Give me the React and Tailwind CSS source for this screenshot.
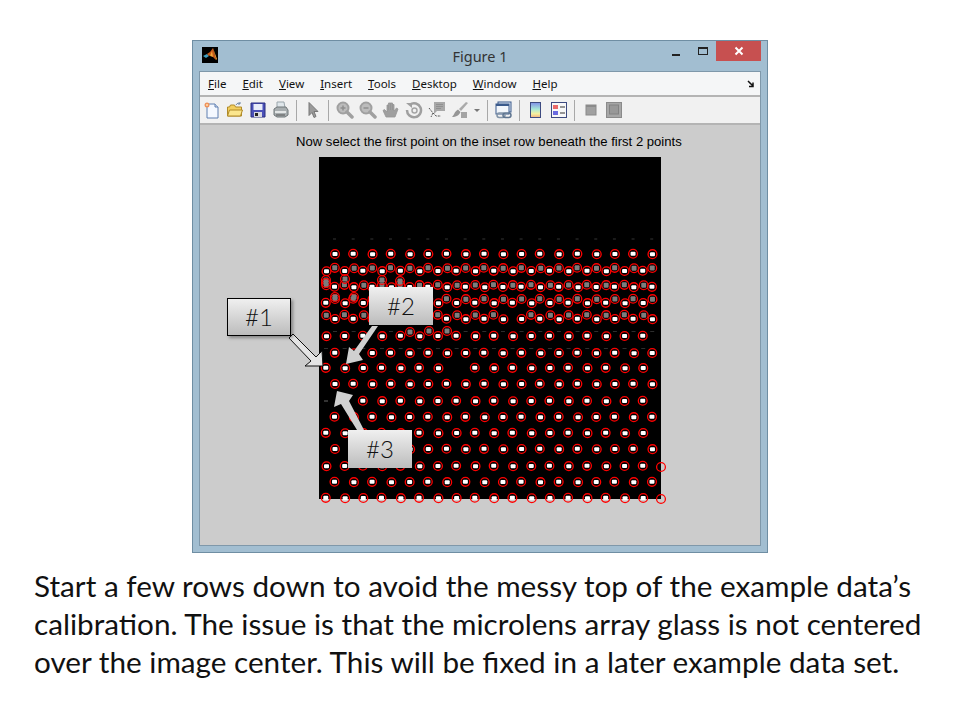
import React from 'react';

const MENU = ['File', 'Edit', 'View', 'Insert', 'Tools', 'Desktop', 'Window', 'Help'];

// spot rows of the calibration image, in image pixels (page y - 157)
const ROWS = [
  { y: 97, grid: 'a', kind: 'w' },
  { y: 111, grid: 'a', kind: 'g' },
  { y: 114, grid: 'b', kind: 'w' },
  { y: 128, grid: 'b', kind: 'g' },
  { y: 130, grid: 'a', kind: 'w' },
  { y: 142, grid: 'a', kind: 'g' },
  { y: 146, grid: 'b', kind: 'w' },
  { y: 158, grid: 'b', kind: 'g', skip: [10] },
  { y: 162, grid: 'a', kind: 'w' },
  { y: 179, grid: 'b', kind: 'w' },
  { y: 196, grid: 'a', kind: 'w' },
  { y: 211, grid: 'b', kind: 'w', skip: [7] },
  { y: 227, grid: 'a', kind: 'w' },
  { y: 244, grid: 'b', kind: 'w', skip: [0, 1] },
  { y: 260, grid: 'a', kind: 'w' },
  { y: 276, grid: 'b', kind: 'w' },
  { y: 292, grid: 'a', kind: 'w' },
  { y: 309, grid: 'b', kind: 'w', extra: true },
  { y: 325, grid: 'a', kind: 'w' },
  { y: 341, grid: 'b', kind: 'w', extra: true },
];

const EXTRA_SPOTS = [
  [7, 123, 'g'], [7, 126, 'g'], [26, 122, 'g'], [63, 123, 'g'], [81, 124, 'g'],
  [16, 140, 'g'], [35, 140, 'g'], [91, 175, 'g'], [110, 174, 'g'], [128, 174, 'g'],
];

function buildSpots() {
  const spots = [];
  ROWS.forEach((row) => {
    const start = row.grid === 'a' ? 16 : 7;
    for (let i = 0; i < 18; i++) {
      if (row.skip && row.skip.includes(i)) continue;
      const wob = (((i * 13 + row.y) % 5) - 2) * 0.25;
      spots.push({ x: start + i * 18.66 + wob, y: row.y + wob * 0.6, kind: row.kind });
    }
    if (row.extra) spots.push({ x: 342, y: row.y + 1, kind: 'none' });
  });
  EXTRA_SPOTS.forEach(([x, y, kind]) => spots.push({ x, y, kind }));
  return spots;
}

function SpotImage() {
  const spots = buildSpots();
  return (
    <svg width="342" height="342" viewBox="0 0 342 342" className="block overflow-visible bg-black">
      {Array.from({ length: 18 }, (_, i) => (
        <g key={i} fill="#2e2e2e">
          <rect x={14 + i * 18.66} y={81} width="3" height="2" fill="#1a1a1a" />
          <rect x={14 + i * 18.66} y={174} width="4" height="1" />
          <rect x={5 + i * 18.66} y={191} width="4" height="1" />
        </g>
      ))}
      <rect x="5" y="243" width="4" height="2" fill="#333" />
      {spots.map((s, i) => (
        <g key={i}>
          {s.kind === 'w' && <rect x={s.x - 2.5} y={s.y - 2} width="5" height="4" rx="1" fill="#fff" />}
          {s.kind === 'g' && <rect x={s.x - 2.5} y={s.y - 2.5} width="5" height="5" rx="1" fill="#7d7d7d" />}
          <circle cx={s.x} cy={s.y} r="4.4" fill="none" stroke="#f00" strokeWidth="1.3" />
        </g>
      ))}
    </svg>
  );
}

function Callout({ label, className }) {
  return (
    <div className={`absolute flex h-[38px] w-[64px] items-center justify-center bg-gradient-to-b from-[#f0f0f0] to-[#bcbcbc] font-['Lato',sans-serif] text-[24px] font-light text-[#111] ${className}`}>
      {label}
    </div>
  );
}

function NewIcon() {
  return (
    <svg width="18" height="18" viewBox="0 0 18 18">
      <path d="M4 3h8l3 3v11H4z" fill="#f4f8ff" stroke="#5f7fb0" />
      <path d="M12 3v3h3" fill="#cfdcf0" stroke="#5f7fb0" />
      <circle cx="4" cy="4" r="2.5" fill="#f0925a" />
      <circle cx="4" cy="4" r="1" fill="#ffe0b0" />
    </svg>
  );
}

function OpenIcon() {
  return (
    <svg width="18" height="18" viewBox="0 0 18 18">
      <path d="M1.5 15V6h2l1-2h4l1 2h6v9z" fill="#f3cf5f" stroke="#b08a28" />
      <path d="M1.5 15l2-6h13l-2 6z" fill="#fbe68e" stroke="#b08a28" />
      <path d="M10 4c1-2 3-2.500 4-1.500M14 1v2h-2" fill="none" stroke="#6d86a5" />
    </svg>
  );
}

function SaveIcon() {
  return (
    <svg width="16" height="16" viewBox="0 0 16 16">
      <path d="M1 1h14v14H1z" fill="#4a50b8" stroke="#2a2f80" />
      <rect x="3.500" y="2" width="9" height="6" fill="#e8ecfa" />
      <rect x="4" y="10" width="8" height="5" fill="#d8d8e0" />
      <rect x="5" y="11" width="3" height="3" fill="#222" />
    </svg>
  );
}

function PrintIcon() {
  return (
    <svg width="16" height="18" viewBox="0 0 16 18">
      <path d="M4 1h7l1 6H4z" fill="#dfe6ea" stroke="#9aa5ab" />
      <path d="M1 8l3-2h9l2 3v5l-3 2H4l-3-2z" fill="#a8aeb0" stroke="#6f7678" />
      <path d="M2 10h11v2H2z" fill="#e3e6e6" />
      <path d="M3 14h9" stroke="#555" />
    </svg>
  );
}

function PointerIcon() {
  return (
    <svg width="14" height="18" viewBox="0 0 14 18">
      <path d="M3 1.500v13l3-3 2 5 2-1-2-5h4z" fill="#9a9a9a" stroke="#777" />
    </svg>
  );
}

function ZoomIcon({ minus }) {
  return (
    <svg width="18" height="18" viewBox="0 0 18 18">
      <circle cx="7" cy="7" r="5.500" fill="#bcbcbc" stroke="#a0a0a0" strokeWidth="2" />
      <path d="M11 11l5 5" stroke="#a0a0a0" strokeWidth="3.500" strokeLinecap="round" />
      <path d={minus ? 'M4.500 7h5' : 'M4.500 7h5M7 4.500v5'} stroke="#8f8f8f" strokeWidth="1.500" />
    </svg>
  );
}

function HandIcon() {
  return (
    <svg width="18" height="18" viewBox="0 0 18 18">
      <path d="M4 16L1 9.500l1.500-1L5 11V4h1.500v5-7H8.500v7-7h2v7-5.500H12V10l2.500-3 1.500 1-3 8z" fill="#9f9f9f" stroke="#959595" strokeWidth="0.800" />
    </svg>
  );
}

function RotateIcon() {
  return (
    <svg width="18" height="18" viewBox="0 0 18 18">
      <path d="M5 3.500A7 7 0 1 1 2 9" fill="none" stroke="#9f9f9f" strokeWidth="2.500" />
      <path d="M1 2h6v5z" fill="#9f9f9f" />
      <circle cx="9.500" cy="9.500" r="2.500" fill="none" stroke="#a5a5a5" strokeWidth="1.500" />
    </svg>
  );
}

function CursorIcon() {
  return (
    <svg width="18" height="18" viewBox="0 0 18 18">
      <rect x="6" y="1" width="11" height="9" fill="#a8a8a8" />
      <path d="M8 3.500h7M8 5.500h7M8 7.500h5" stroke="#909090" />
      <path d="M6 10v3l3-3z" fill="#a8a8a8" />
      <path d="M1 7l4 5M5 12l-2 4M5 12l3 3h5" fill="none" stroke="#555" strokeDasharray="2 1" />
    </svg>
  );
}

function BrushIcon() {
  return (
    <svg width="18" height="18" viewBox="0 0 18 18">
      <path d="M15 1l2 1-7 8-2-2z" fill="#aaa" />
      <path d="M7 8.500l2.500 2.500C8.500 14 5 16 1 16c2-1.500 2-5 6-7.500z" fill="#969696" />
      <rect x="10" y="11" width="6" height="6" fill="#a4a4a4" />
    </svg>
  );
}

function LinkIcon() {
  return (
    <svg width="18" height="18" viewBox="0 0 18 18">
      <rect x="3" y="1" width="13" height="10" fill="#dfe8f4" stroke="#3a5a8c" />
      <rect x="1" y="3" width="13" height="10" fill="#f2f6fb" stroke="#3a5a8c" />
      <rect x="1" y="3" width="13" height="2" fill="#3a5a8c" />
      <rect x="2" y="12" width="8" height="4.500" rx="2.200" fill="none" stroke="#8294a8" strokeWidth="1.500" />
      <rect x="8" y="12" width="8" height="4.500" rx="2.200" fill="none" stroke="#5f7590" strokeWidth="1.500" />
    </svg>
  );
}

function ColorbarIcon() {
  return (
    <svg width="12" height="16" viewBox="0 0 12 16">
      <defs>
        <linearGradient id="cbar" x1="0" y1="0" x2="0" y2="1">
          <stop offset="0" stopColor="#7f8fe8" />
          <stop offset="0.45" stopColor="#a8e8d8" />
          <stop offset="0.75" stopColor="#f4f0a0" />
          <stop offset="1" stopColor="#f0b080" />
        </linearGradient>
      </defs>
      <rect x="0.500" y="0.500" width="10" height="15" fill="url(#cbar)" stroke="#3d4a80" />
    </svg>
  );
}

function LegendIcon() {
  return (
    <svg width="16" height="16" viewBox="0 0 16 16">
      <rect x="0.500" y="0.500" width="15" height="15" fill="#f8f8f8" stroke="#3d4a80" />
      <rect x="2" y="3" width="5" height="4" fill="#ea6a6a" />
      <rect x="2" y="9" width="5" height="4" fill="#6a6ae0" />
      <path d="M9 5h5M9 11h5" stroke="#333" />
    </svg>
  );
}

function PlotBoxIcon() {
  return (
    <svg width="12" height="12" viewBox="0 0 12 12">
      <rect x="1" y="1" width="10" height="10" fill="#a0a0a0" stroke="#8a8a8a" />
      <rect x="1" y="1" width="10" height="2" fill="#8a8a8a" />
    </svg>
  );
}

function DockIcon() {
  return (
    <svg width="16" height="16" viewBox="0 0 16 16">
      <rect x="0.500" y="0.500" width="15" height="15" fill="#a6a6a6" stroke="#8a8a8a" />
      <rect x="3.500" y="3" width="9" height="9" fill="#989898" stroke="#828282" />
    </svg>
  );
}

function Btn({ children }) {
  return <div className="flex h-[20px] w-[23px] shrink-0 items-center justify-center">{children}</div>;
}

function Sep() {
  return <div className="mx-[4px] h-[21px] w-px shrink-0 bg-[#a8a8a8]" />;
}

function MatlabLogo() {
  return (
    <svg width="16" height="16" viewBox="0 0 16 16" className="block">
      <rect width="16" height="16" fill="#000" />
      <path d="M1 9l4-2 2 2-3 2z" fill="#3f9fc0" />
      <path d="M5 7l3-2 3-4 3 12-3-3-2-2-2 1z" fill="#c8591a" />
      <path d="M11 1l3 12 1-1z" fill="#f0a030" />
      <path d="M10 4l1 6-3-1z" fill="#f4a83a" />
    </svg>
  );
}

export default function App() {
  return (
    <div className="h-[720px] w-[960px] overflow-hidden bg-white pt-[40px]">
      {/* figure window */}
      <div className="mx-auto flex h-[513px] w-[576px] flex-col border border-[#6f8ea3] bg-[#a2bed1]">
        <div className="flex h-[30px] shrink-0 items-start">
          <div className="ml-[9px] mt-[6px]">
            <MatlabLogo />
          </div>
          <div className="flex-1 pl-[70px] pt-[5px] text-center font-['Noto_Sans',sans-serif] text-[14.5px] leading-[20px] text-[#333]">
            Figure 1
          </div>
          <div className="mr-[2px] mt-[6px] flex items-start">
            <div className="mr-[18px] mt-[7px] h-[2px] w-[8px] bg-[#222]" />
            <div className="mr-[8px] h-[8px] w-[10px] border border-t-2 border-[#222]" />
            <div className="-mt-[6px] mr-[4px] flex h-[20px] w-[45px] items-center justify-center bg-[#c75050]">
              <svg width="10" height="10" viewBox="0 0 10 10">
                <path d="M1.500 1.500l7 7M8.500 1.500l-7 7" stroke="#fff" strokeWidth="2" />
              </svg>
            </div>
          </div>
        </div>

        <div className="mx-[6px] mb-[6px] flex flex-1 flex-col border border-[#7f98aa] bg-[#f0f0f0]">
          {/* menu bar */}
          <div className="flex h-[25px] shrink-0 items-center justify-between border-b-2 border-[#b4b4b4] bg-[#f5f6f7] pl-[8px] pr-[5px] font-['Noto_Sans',sans-serif] text-[11.5px] text-[#111]">
            <div className="flex gap-[16px]">
              {MENU.map((item) => (
                <span key={item}>
                  <span className="underline">{item[0]}</span>
                  {item.slice(1)}
                </span>
              ))}
            </div>
            <svg width="8" height="8" viewBox="0 0 8 8">
              <path d="M1 1l5 5M6 2.500V6.500H2" fill="none" stroke="#111" strokeWidth="1.500" />
            </svg>
          </div>

          {/* toolbar */}
          <div className="flex h-[28px] shrink-0 items-center border-b-2 border-[#b4b4b4] bg-[#f1f1f1]">
            <Btn><NewIcon /></Btn>
            <Btn><OpenIcon /></Btn>
            <Btn><SaveIcon /></Btn>
            <Btn><PrintIcon /></Btn>
            <Sep />
            <Btn><PointerIcon /></Btn>
            <Sep />
            <Btn><ZoomIcon /></Btn>
            <Btn><ZoomIcon minus /></Btn>
            <Btn><HandIcon /></Btn>
            <Btn><RotateIcon /></Btn>
            <Btn><CursorIcon /></Btn>
            <Btn><BrushIcon /></Btn>
            <div className="flex w-[12px] shrink-0 justify-center">
              <div className="h-0 w-0 border-x-[3px] border-t-[3px] border-x-transparent border-t-[#777]" />
            </div>
            <Sep />
            <Btn><LinkIcon /></Btn>
            <Sep />
            <Btn><ColorbarIcon /></Btn>
            <Btn><LegendIcon /></Btn>
            <Sep />
            <Btn><PlotBoxIcon /></Btn>
            <Btn><DockIcon /></Btn>
          </div>

          {/* plot area */}
          <div className="relative flex-1 bg-[#cccccc]">
            <div className="whitespace-nowrap pl-[96px] pt-[9px] font-['Liberation_Sans',sans-serif] text-[13.1px] leading-[16px] text-black">
              Now select the first point on the inset row beneath the first 2 points
            </div>
            <div className="ml-[119px] mt-[7px] w-[342px]">
              <SpotImage />
            </div>

            <svg width="560" height="420" viewBox="200 125 560 420" className="absolute left-0 top-0">
              <path d="M289 338l4-4 23 23 6-6 1 15h-18l6-5z" fill="#e4e4e4" stroke="#111" strokeWidth="1" />
              <path d="M372 326h6l-19 28 4 6-17 4 3-17 5 4z" fill="#d0d0d0" />
              <path d="M357 430h7l-15-29 4-6-16-4-3 16 7-3z" fill="#d0d0d0" />
            </svg>

            <Callout label="#1" className="left-[27px] top-[173px] border border-black shadow-[2px_2px_3px_rgba(0,0,0,0.35)]" />
            <Callout label="#2" className="left-[169px] top-[162px]" />
            <Callout label="#3" className="left-[148px] top-[305px]" />
          </div>
        </div>
      </div>

      {/* slide caption */}
      <div className="mt-[14px] whitespace-nowrap pl-[34px] font-['Lato',sans-serif] text-[29.7px] leading-[38px] text-[#111]">
        <div>Start a few rows down to avoid the messy top of the example data’s</div>
        <div>calibration. The issue is that the microlens array glass is not centered</div>
        <div>over the image center. This will be fixed in a later example data set.</div>
      </div>
    </div>
  );
}
